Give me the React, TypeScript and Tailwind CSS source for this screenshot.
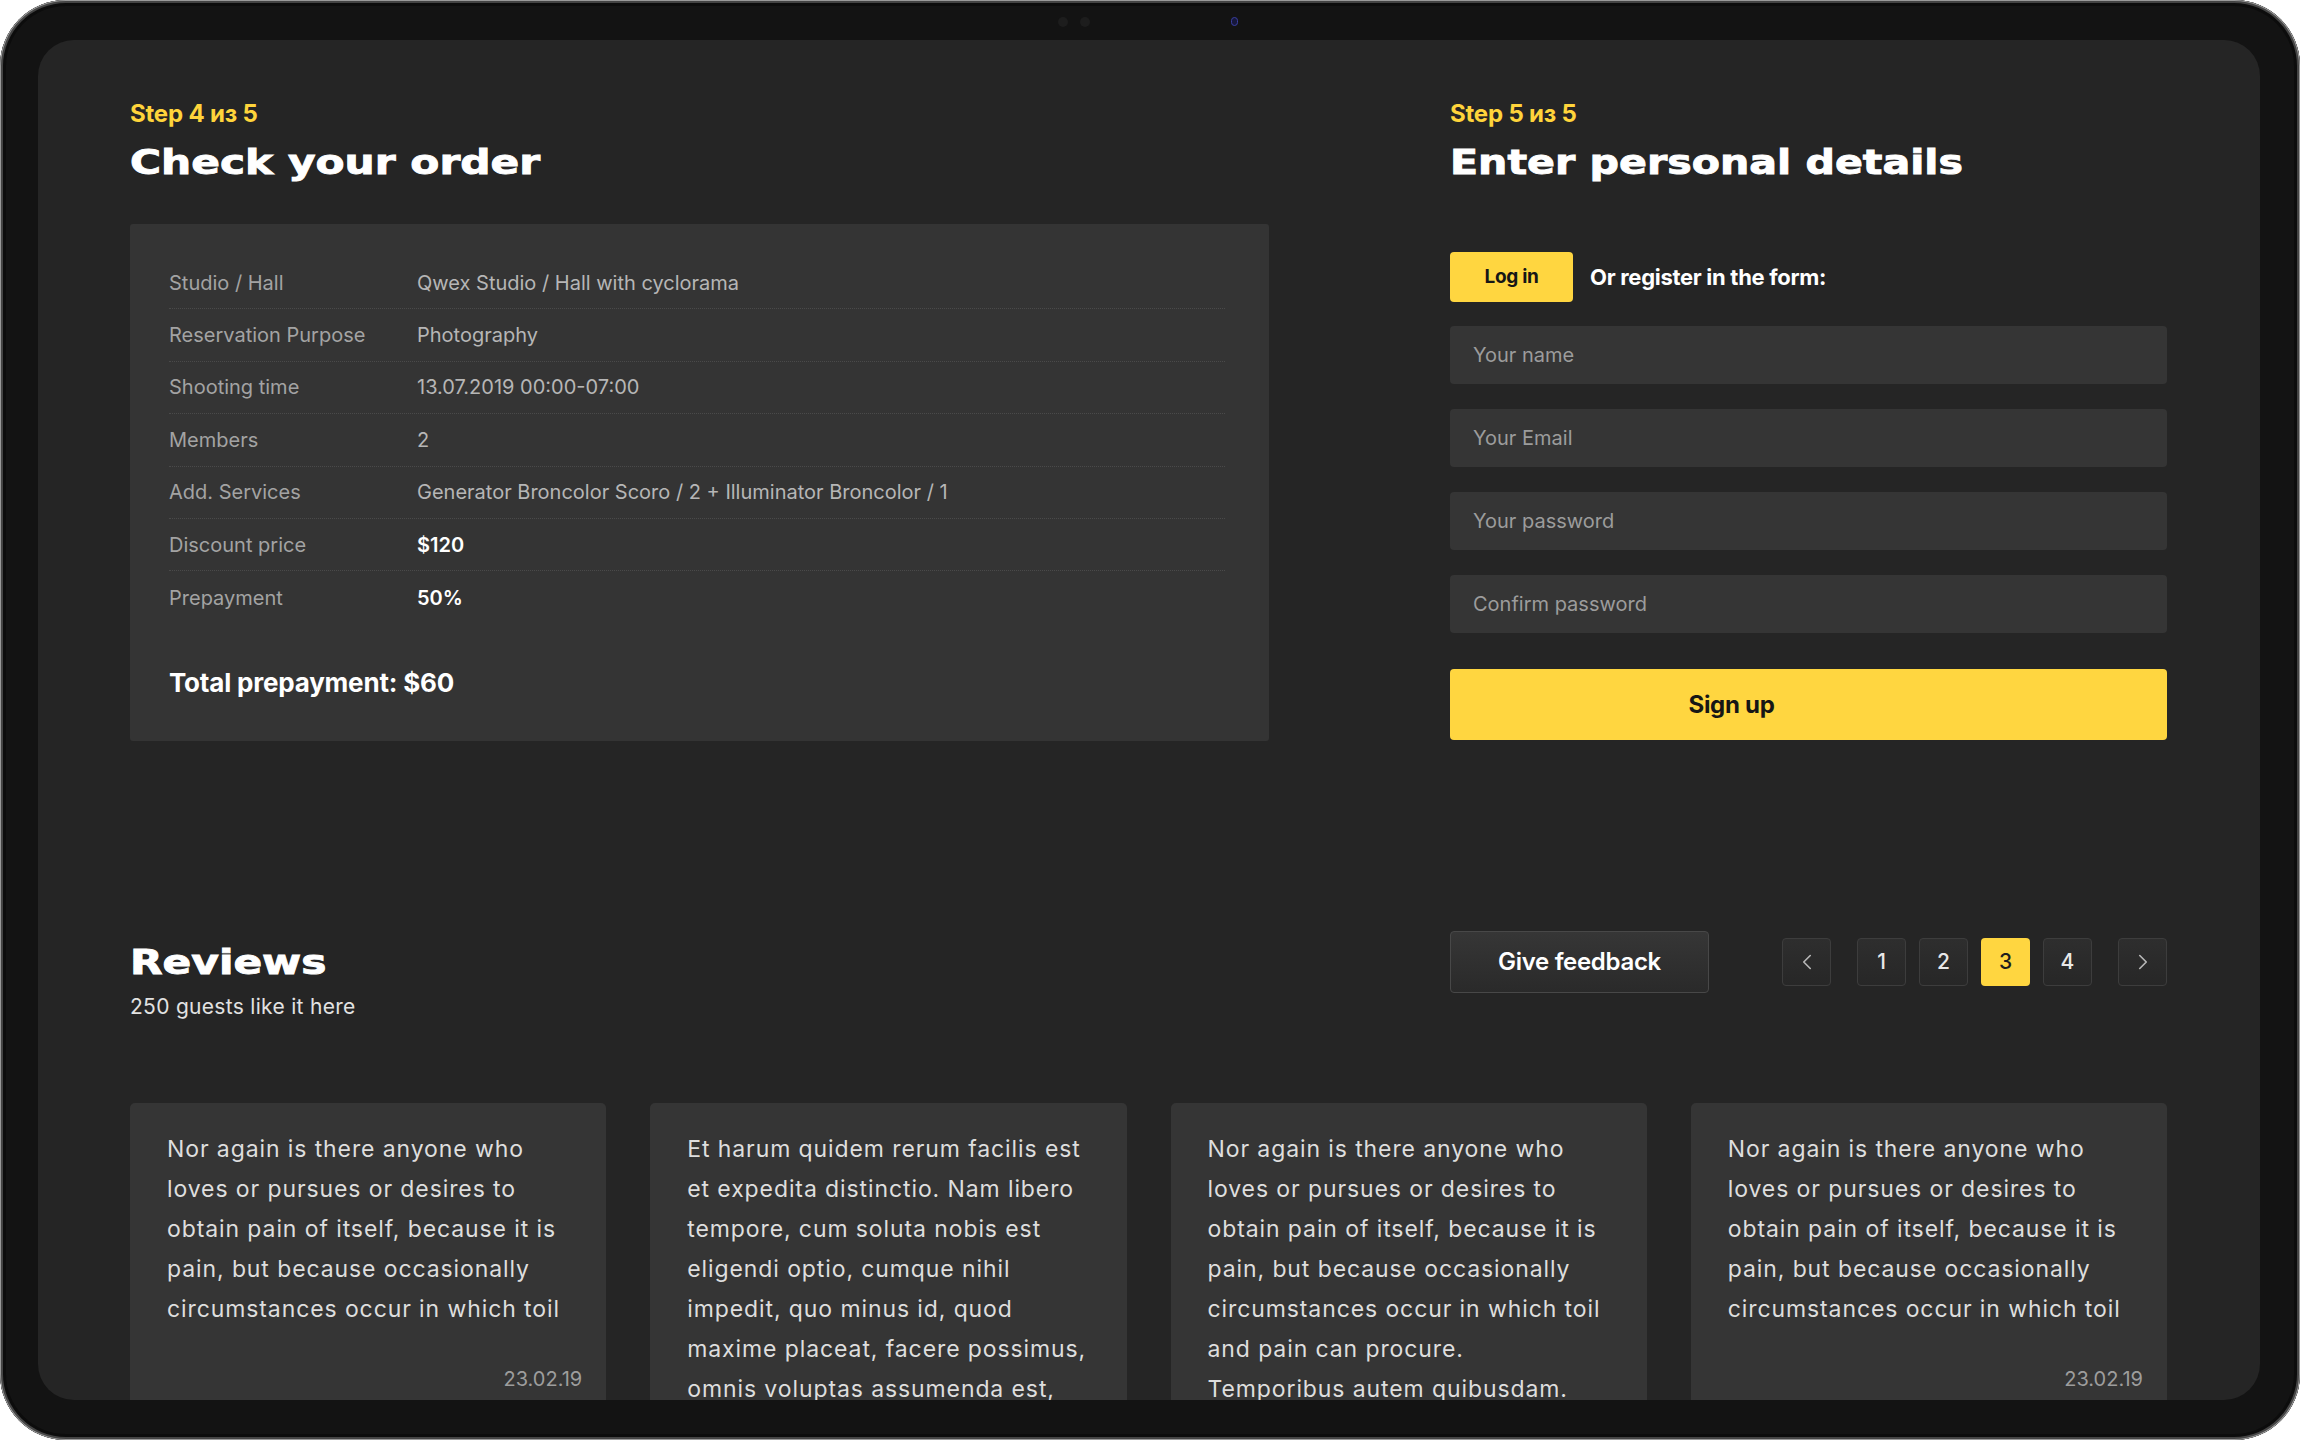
import React from "react";
import { ChevronLeft, ChevronRight } from "lucide-react";

const orderRows = [
    { label: "Studio / Hall", value: "Qwex Studio / Hall with cyclorama" },
    { label: "Reservation Purpose", value: "Photography" },
    { label: "Shooting time", value: "13.07.2019  00:00-07:00" },
    { label: "Members", value: "2" },
    { label: "Add. Services", value: "Generator Broncolor Scoro / 2 + Illuminator Broncolor / 1" },
    { label: "Discount price", value: "$120", strong: true },
    { label: "Prepayment", value: "50%", strong: true },
];

const fields = ["Your name", "Your Email", "Your password", "Confirm password"];

const painLines = [
    "Nor again is there anyone who",
    "loves or pursues or desires to",
    "obtain pain of itself, because it is",
    "pain, but because occasionally",
    "circumstances occur in which toil",
];

const reviews = [
    { lines: painLines, date: "23.02.19" },
    {
        lines: [
            "Et harum quidem rerum facilis est",
            "et expedita distinctio. Nam libero",
            "tempore, cum soluta nobis est",
            "eligendi optio, cumque nihil",
            "impedit, quo minus id, quod",
            "maxime placeat, facere possimus,",
            "omnis voluptas assumenda est,",
            "omnis dolor repellendus.",
        ],
        date: "23.02.19",
    },
    {
        lines: [...painLines, "and pain can procure.", "Temporibus autem quibusdam.", "Et aut officiis debitis aut"],
        date: "23.02.19",
    },
    { lines: painLines, date: "23.02.19" },
];

function Heading({ children, wide }: { children: React.ReactNode; wide?: boolean }) {
    return (
        <h1 className="h-[40px] font-['DejaVu_Sans',sans-serif] text-[34px] font-bold leading-[40px] text-white [-webkit-text-stroke:0.9px_white]">
            <span
                className={
                    wide
                        ? "inline-block origin-left scale-x-[1.245] whitespace-nowrap"
                        : "inline-block origin-left scale-x-[1.21] whitespace-nowrap"
                }
            >
                {children}
            </span>
        </h1>
    );
}

function StepLabel({ children }: { children: React.ReactNode }) {
    return <div className="text-[24px] font-bold leading-[28px] tracking-[-0.2px] text-[#ffd43b]">{children}</div>;
}

function PageBox({ children, active }: { children: React.ReactNode; active?: boolean }) {
    return (
        <div
            className={
                active
                    ? "flex h-[48px] w-[49px] items-center justify-center rounded-[4px] bg-[#ffd640] text-[21px] font-medium text-[#1e1e1e]"
                    : "flex h-[48px] w-[49px] items-center justify-center rounded-[4px] border border-[#3d3d3d] bg-gradient-to-b from-[#2e2e2e] to-[#272727] text-[21px] font-medium text-[#e8e8e8]"
            }
        >
            {children}
        </div>
    );
}

export default function App() {
    return (
        <div className="h-[1440px] w-[2300px] bg-white font-['Inter',sans-serif]">
            {/* Device frame */}
            <div className="relative flex h-full w-full rounded-[66px] bg-[#131313] pb-[40px] pl-[38px] pr-[40px] pt-[40px] shadow-[inset_0_0_0_1px_#9a9a9a,inset_0_0_0_3px_#444444,inset_0_0_0_6px_#0c0c0c]">
                <div className="absolute left-[1058px] top-[17px] h-[10px] w-[10px] rounded-full bg-[#1d1d1d]" />
                <div className="absolute left-[1080px] top-[17px] h-[10px] w-[10px] rounded-full bg-[#1d1d1d]" />
                <div className="absolute left-[1231px] top-[17px] h-[9px] w-[7px] rounded-full border border-[#3a3fa0] bg-[#16173a]" />

                {/* Screen */}
                <div className="flex-1 overflow-hidden rounded-[36px] bg-[#252525] pl-[92px] pr-[93px] pt-[60px]">
                    {/* Steps */}
                    <div className="flex justify-between">
                        <section className="w-[1139px]">
                            <StepLabel>Step 4 из 5</StepLabel>
                            <div className="mt-[14px]">
                                <Heading wide>Check your order</Heading>
                            </div>

                            <div className="mt-[42px] rounded-[3px] bg-[#343434] pb-[42px] pl-[39px] pr-[44px] pt-[33px]">
                                {orderRows.map((row, i) => (
                                    <div
                                        key={row.label}
                                        className={
                                            i < orderRows.length - 1
                                                ? "flex h-[52.4px] items-center border-b border-dotted border-[#4a4a4a] text-[20px]"
                                                : "flex h-[52.4px] items-center text-[20px]"
                                        }
                                    >
                                        <span className="w-[248px] shrink-0 text-[#a3a3a3]">{row.label}</span>
                                        <span className={row.strong ? "font-semibold text-white" : "text-[#b6b6b6]"}>
                                            {row.value}
                                        </span>
                                    </div>
                                ))}
                                <div className="mt-[43px] text-[26px] font-bold leading-[32px] tracking-[-0.2px] text-white">
                                    Total prepayment: $60
                                </div>
                            </div>
                        </section>

                        <section className="w-[717px]">
                            <StepLabel>Step 5 из 5</StepLabel>
                            <div className="mt-[14px]">
                                <Heading>Enter personal details</Heading>
                            </div>

                            <div className="mt-[70px] flex items-center gap-[17px]">
                                <button className="h-[50px] w-[123px] rounded-[4px] bg-[#ffd640] text-[19px] font-bold tracking-[-0.3px] text-[#161616]">
                                    Log in
                                </button>
                                <span className="text-[22px] font-bold tracking-[-0.3px] text-white">Or register in the form:</span>
                            </div>

                            <div className="mt-[24px] flex flex-col gap-[25px]">
                                {fields.map((f) => (
                                    <div
                                        key={f}
                                        className="flex h-[58px] items-center rounded-[4px] bg-[#353535] pl-[23px] text-[20px] text-[#9c9c9c]"
                                    >
                                        {f}
                                    </div>
                                ))}
                            </div>

                            <button className="mt-[36px] flex h-[71px] w-full items-center justify-center rounded-[4px] bg-[#ffd640] pr-[154px] text-[24px] font-bold tracking-[-0.3px] text-[#161616]">
                                Sign up
                            </button>
                        </section>
                    </div>

                    {/* Reviews header */}
                    <div className="mt-[190px] flex items-start justify-between">
                        <div className="pt-[11px]">
                            <Heading wide>Reviews</Heading>
                            <div className="mt-[11px] text-[21px] leading-[28px] tracking-[0.3px] text-[#e2e2e2]">
                                250 guests like it here
                            </div>
                        </div>

                        <div className="flex w-[717px] items-center justify-between">
                            <button className="h-[62px] w-[259px] rounded-[4px] border border-[#484848] bg-gradient-to-b from-[#363636] to-[#2a2a2a] text-[24px] font-semibold tracking-[-0.3px] text-white">
                                Give feedback
                            </button>

                            <div className="flex items-center">
                                <PageBox>
                                    <ChevronLeft size={26} strokeWidth={1.5} className="text-[#b8b8b8]" />
                                </PageBox>
                                <div className="ml-[26px] flex gap-[13px]">
                                    <PageBox>1</PageBox>
                                    <PageBox>2</PageBox>
                                    <PageBox active>3</PageBox>
                                    <PageBox>4</PageBox>
                                </div>
                                <div className="ml-[26px]">
                                    <PageBox>
                                        <ChevronRight size={26} strokeWidth={1.5} className="text-[#b8b8b8]" />
                                    </PageBox>
                                </div>
                            </div>
                        </div>
                    </div>

                    {/* Review cards */}
                    <div className="mt-[82px] grid grid-cols-4 gap-[44px]">
                        {reviews.map((r, i) => (
                            <article key={i} className="h-[340px] rounded-[5px] bg-[#353535] pl-[37px] pr-[24px] pt-[26px]">
                                <p className="text-[23px] leading-[40px] tracking-[0.9px] text-[#dedede]">
                                    {r.lines.map((line) => (
                                        <span key={line} className="block whitespace-nowrap">
                                            {line}
                                        </span>
                                    ))}
                                </p>
                                <div className="mt-[37px] text-right text-[20px] leading-[26px] text-[#9d9d9d]">{r.date}</div>
                            </article>
                        ))}
                    </div>
                </div>
            </div>
        </div>
    );
}
